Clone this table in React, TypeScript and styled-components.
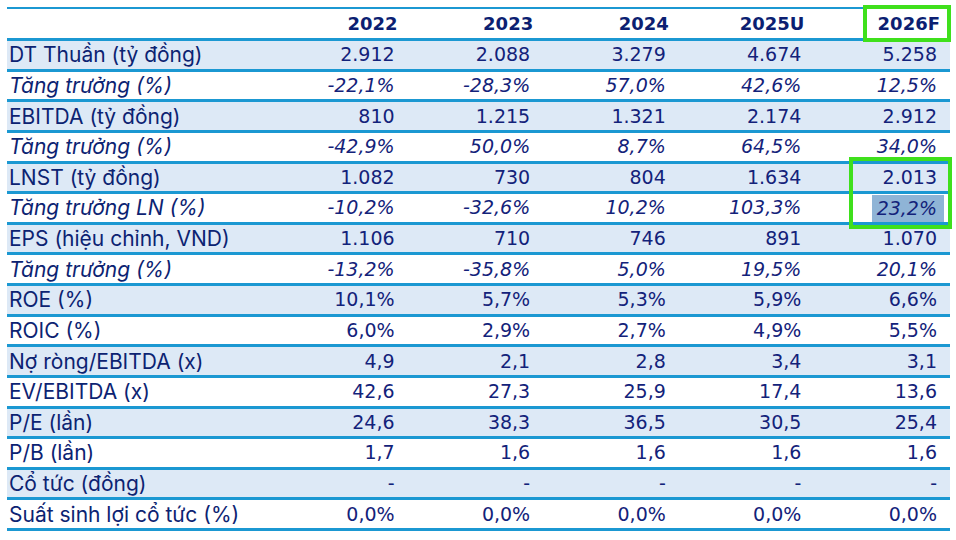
import React from "react";
import styled, { createGlobalStyle } from "styled-components";

const Global = createGlobalStyle`
  html, body { margin: 0; padding: 0; background: #ffffff; }
  body { width: 956px; height: 540px; overflow: hidden; }
`;

const LINE = "#1b98d2";
const LIGHT = "#dde9f6";
const NAVY = "#13227a";

const Page = styled.div`
  padding: 7px 6px 0 7px;
`;

const Table = styled.div`
  position: relative;
  width: 943px;
`;

const Row = styled.div<{ $shade?: boolean; $head?: boolean }>`
  display: grid;
  grid-template-columns: 265px repeat(5, 1fr);
  align-items: center;
  box-sizing: border-box;
  height: ${(p) => (p.$head ? "34px" : "30.625px")};
  border-top: ${(p) => (p.$head ? `2px solid ${LINE}` : "none")};
  border-bottom: 3px solid ${LINE};
  background: ${(p) => (p.$shade ? LIGHT : "#ffffff")};
`;

const Label = styled.div<{ $italic?: boolean }>`
  padding-left: 2px;
  font-family: Inter, "Liberation Sans", sans-serif;
  font-size: 21px;
  font-style: ${(p) => (p.$italic ? "italic" : "normal")};
  color: #0c2372;
  white-space: nowrap;
  line-height: 1;
`;

const Num = styled.div<{ $italic?: boolean }>`
  text-align: right;
  padding-right: 13px;
  font-family: "DejaVu Sans", Verdana, sans-serif;
  font-size: 19px;
  font-style: ${(p) => (p.$italic ? "italic" : "normal")};
  color: ${NAVY};
  white-space: nowrap;
  line-height: 1;
`;

const Head = styled.div`
  text-align: right;
  padding-right: 10px;
  font-family: "DejaVu Sans", Verdana, sans-serif;
  font-weight: bold;
  font-size: 18px;
  color: #0c1f72;
  line-height: 1;
`;

const Mark = styled.span`
  display: inline-block;
  background: #8fb4d6;
  padding: 4px 7px 4px 5px;
  margin: -1px -7px -2px 0;
  line-height: 1;
`;

const GreenBox = styled.div`
  position: absolute;
  border: 4px solid #3fe01c;
  box-sizing: border-box;
  pointer-events: none;
`;

type R = { label: string; italic?: boolean; values: string[] };

const rows: R[] = [
  { label: "DT Thuần (tỷ đồng)", values: ["2.912", "2.088", "3.279", "4.674", "5.258"] },
  { label: "Tăng trưởng (%)", italic: true, values: ["-22,1%", "-28,3%", "57,0%", "42,6%", "12,5%"] },
  { label: "EBITDA (tỷ đồng)", values: ["810", "1.215", "1.321", "2.174", "2.912"] },
  { label: "Tăng trưởng (%)", italic: true, values: ["-42,9%", "50,0%", "8,7%", "64,5%", "34,0%"] },
  { label: "LNST (tỷ đồng)", values: ["1.082", "730", "804", "1.634", "2.013"] },
  { label: "Tăng trưởng LN (%)", italic: true, values: ["-10,2%", "-32,6%", "10,2%", "103,3%", "23,2%"] },
  { label: "EPS (hiệu chỉnh, VND)", values: ["1.106", "710", "746", "891", "1.070"] },
  { label: "Tăng trưởng (%)", italic: true, values: ["-13,2%", "-35,8%", "5,0%", "19,5%", "20,1%"] },
  { label: "ROE (%)", values: ["10,1%", "5,7%", "5,3%", "5,9%", "6,6%"] },
  { label: "ROIC (%)", values: ["6,0%", "2,9%", "2,7%", "4,9%", "5,5%"] },
  { label: "Nợ ròng/EBITDA (x)", values: ["4,9", "2,1", "2,8", "3,4", "3,1"] },
  { label: "EV/EBITDA (x)", values: ["42,6", "27,3", "25,9", "17,4", "13,6"] },
  { label: "P/E (lần)", values: ["24,6", "38,3", "36,5", "30,5", "25,4"] },
  { label: "P/B (lần)", values: ["1,7", "1,6", "1,6", "1,6", "1,6"] },
  { label: "Cổ tức (đồng)", values: ["-", "-", "-", "-", "-"] },
  { label: "Suất sinh lợi cổ tức (%)", values: ["0,0%", "0,0%", "0,0%", "0,0%", "0,0%"] },
];

const years = ["2022", "2023", "2024", "2025U", "2026F"];

export default function App() {
  return (
    <Page>
      <Global />
      <Table>
        <Row $head>
          <Label />
          {years.map((y) => (
            <Head key={y}>{y}</Head>
          ))}
        </Row>
        {rows.map((r, i) => (
          <Row key={i} $shade={i % 2 === 0}>
            <Label $italic={r.italic}>{r.label}</Label>
            {r.values.map((v, j) => (
              <Num key={j} $italic={r.italic}>
                {i === 5 && j === 4 ? <Mark>{v}</Mark> : v}
              </Num>
            ))}
          </Row>
        ))}
        <GreenBox style={{ left: 856, top: -2, width: 88, height: 37 }} />
        <GreenBox style={{ left: 842, top: 150, width: 103, height: 72 }} />
      </Table>
    </Page>
  );
}
